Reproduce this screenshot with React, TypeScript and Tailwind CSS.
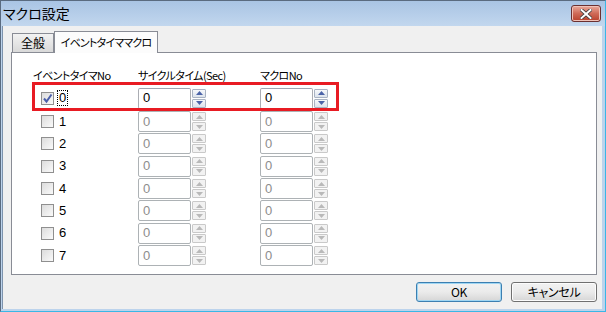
import React from "react";

const jp = "font-['Noto_Sans_CJK_JP','Noto_Sans',sans-serif] [font-feature-settings:'palt']";
const num = "font-['Liberation_Sans','DejaVu_Sans',sans-serif]";

function Arrow({ up, enabled }: { up?: boolean; enabled: boolean }) {
  return (
    <div
      className={`flex h-[9px] w-[14px] items-center justify-center rounded-[1px] border ${
        enabled ? "border-[#a9b3c3] bg-gradient-to-b from-[#f6f8fb] to-[#dde3ec]" : "border-[#c9c9c9] bg-[#f2f2f2]"
      }`}
    >
      <svg width="7" height="4" viewBox="0 0 7 4">
        <path d={up ? "M0 4 L3.5 0 L7 4 Z" : "M0 0 L3.5 4 L7 0 Z"} fill={enabled ? "#4b63a8" : "#b9b9b9"} />
      </svg>
    </div>
  );
}

function Spin({ enabled }: { enabled: boolean }) {
  return (
    <div className="flex items-center gap-[1px]">
      <div
        className={`flex h-[21px] w-[53px] items-center rounded-[2px] border bg-white pl-[4px] text-[13px] ${num} ${
          enabled ? "border-[#abadb3] border-t-[#a0a6b2] text-black" : "border-[#adb2b5] text-[#8d8d8d]"
        }`}
      >
        0
      </div>
      <div className="flex flex-col gap-[1px]">
        <Arrow up enabled={enabled} />
        <Arrow enabled={enabled} />
      </div>
    </div>
  );
}

function Row({ n }: { n: number }) {
  const on = n === 0;
  return (
    <div className="flex h-[22.35px] items-center">
      <div className="flex w-[105px] items-center pl-[8px]">
        <div className="flex h-[13px] w-[13px] items-center justify-center border border-[#8f8f8f] bg-gradient-to-br from-[#dcdcdc] to-[#fafafa]">
          {on && (
            <svg width="11" height="11" viewBox="0 0 11 11">
              <path d="M2 5.5 L4.5 8.5 L9.5 1.5" fill="none" stroke="#4a5faa" strokeWidth="2" />
            </svg>
          )}
        </div>
        <span className={`ml-[4px] px-[1px] text-[13px] leading-[14px] text-black ${num} ${on ? "outline-1 outline-dotted outline-black" : ""}`}>
          {n}
        </span>
      </div>
      <div className="w-[122px]">
        <Spin enabled={on} />
      </div>
      <Spin enabled={on} />
    </div>
  );
}

function Button({ label, def }: { label: string; def?: boolean }) {
  return (
    <div
      className={`flex h-[20px] w-[86px] items-center justify-center rounded-[3px] border bg-gradient-to-b from-[#f2f2f2] via-[#ebebeb] to-[#d6d6d6] text-[12px] tracking-[-0.3px] text-black ${jp} ${
        def ? "border-[#3c7fb1] shadow-[inset_0_0_0_1px_#9fd6f3]" : "border-[#707070] shadow-[inset_0_0_0_1px_#fcfcfc]"
      }`}
    >
      {label}
    </div>
  );
}

export default function App() {
  return (
    <div className="flex h-[312px] w-[606px] flex-col overflow-hidden border border-[#5a6b80] border-r-[#3ab7e6] border-b-[#3ab7e6] bg-[#bcd3ec]">
      {/* title bar */}
      <div className="flex h-[25px] shrink-0 items-center justify-between bg-gradient-to-b from-[#a9c4e4] to-[#c2d7ee] pl-[2px] pr-[4px]">
        <span className={`text-[14px] text-black ${jp}`}>マクロ設定</span>
        <div className="flex h-[17px] w-[30px] items-center justify-center rounded-[3px] border border-[#6b3030] bg-gradient-to-b from-[#e9a99c] via-[#cf6a57] to-[#b8402c] shadow-[inset_0_0_0_1px_#f0c2b8]">
          <svg width="12" height="10" viewBox="0 0 12 10">
            <path d="M1.5 1 L10.5 9 M10.5 1 L1.5 9" stroke="#3b3b3b" strokeWidth="3.6" strokeLinecap="square" />
            <path d="M1.5 1 L10.5 9 M10.5 1 L1.5 9" stroke="#ffffff" strokeWidth="2" strokeLinecap="square" />
          </svg>
        </div>
      </div>

      {/* body */}
      <div className="mb-[2px] ml-[1px] mr-[3px] flex flex-1 flex-col border-l border-[#7d93ad] bg-[#f0f0f0] pl-[8px] pr-[5px] pt-[5px]">
        {/* tabs */}
        <div className="relative z-10 flex h-[21px] items-end pl-[1px]">
          <div className={`flex h-[19px] w-[42px] items-center justify-center whitespace-nowrap border border-b-0 border-[#898c95] bg-gradient-to-b from-[#f2f2f2] to-[#d9d9d9] text-[12px] text-black ${jp}`}>
            全般
          </div>
          <div className={`-mb-[1px] flex h-[22px] w-[104px] items-start justify-center whitespace-nowrap border border-b-0 border-[#898c95] bg-[#fcfcfc] pt-[2px] text-[11px] tracking-[-0.8px] text-black ${jp}`}>
            イベントタイママクロ
          </div>
        </div>
        {/* panel */}
        <div className="h-[223px] border border-[#898c95] bg-white pt-[14px]">
          <div className="ml-[21px] flex whitespace-nowrap text-[11px] leading-[16px] tracking-[-0.6px] text-black">
            <span className={`w-[105px] ${jp}`}>イベントタイマNo</span>
            <span className={`w-[122px] ${jp}`}>サイクルタイム(Sec)</span>
            <span className={jp}>マクロNo</span>
          </div>
          <div className="relative ml-[21px]">
            <div className="pointer-events-none absolute -left-[1px] -top-[1px] h-[29px] w-[307px] border-[3px] border-[#e81b23]" />
            <div className="pt-[4px]">
              <Row n={0} />
              <div className="h-[1px]" />
              {[1, 2, 3, 4, 5, 6, 7].map((n) => (
                <Row key={n} n={n} />
              ))}
            </div>
          </div>
        </div>
        {/* buttons */}
        <div className="mt-[7px] flex justify-end gap-[9px]">
          <Button label="OK" def />
          <Button label="キャンセル" />
        </div>
      </div>
    </div>
  );
}
